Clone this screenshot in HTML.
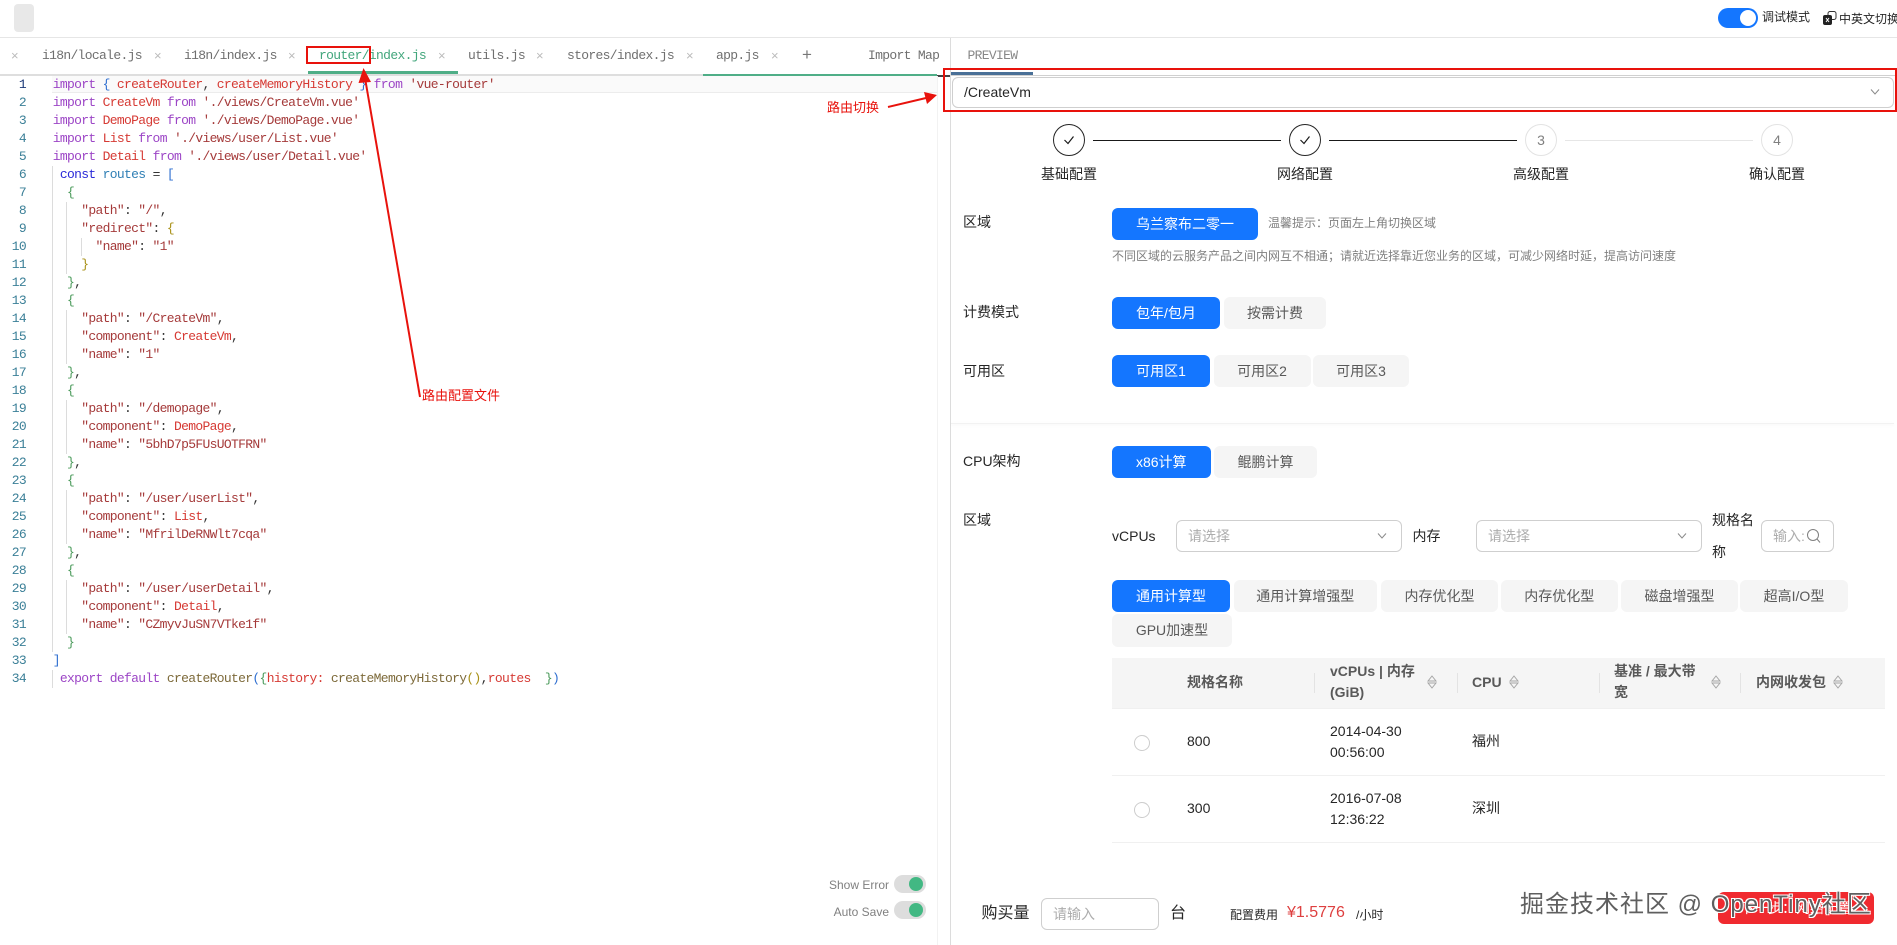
<!DOCTYPE html>
<html lang="zh"><head><meta charset="utf-8"><title>Playground</title>
<style>
html,body{margin:0;padding:0;width:1897px;height:945px;overflow:hidden;background:#fff}
body{position:relative;font-family:"Liberation Sans","Noto Sans CJK SC",sans-serif;font-size:14px;color:#262626}
.a{position:absolute;white-space:nowrap}
.t{position:absolute;white-space:nowrap;line-height:20px}
.mono{font-family:"Liberation Mono","Noto Sans CJK SC",monospace;font-size:13px;letter-spacing:-.67px}
.tab{position:absolute;top:47px;line-height:18px;color:#6f6f6f;white-space:nowrap}
.x{position:absolute;top:47px;line-height:18px;color:#bbb;font-size:13px;font-family:"Liberation Sans",sans-serif}
#code{position:absolute;left:52.7px;top:76px;white-space:pre;line-height:18px;color:#333}
#nums{position:absolute;left:0;top:76px;width:26px;text-align:right;line-height:18px;color:#3a7f97}
.k{color:#9c45c6}.b{color:#2f6fd0}.r{color:#d63a34}.s{color:#a53a3a}.g{color:#4a9a5a}.y{color:#a89016}.f{color:#7d6a3a}.c{color:#2a2ad8}.v{color:#2f7fb5}
.gd{position:absolute;width:1px;background:#dcdcdc}
.btn{position:absolute;height:32px;line-height:32px;text-align:center;border-radius:6px;background:#f5f5f5;color:#595959;white-space:nowrap}
.btn.on{background:#1476ff;color:#fff}
.box{position:absolute;box-sizing:border-box;border:1px solid #cfcfcf;border-radius:6px;background:#fff}
.ph{color:#adadad}
.circ{position:absolute;top:124px;width:32px;height:32px;box-sizing:border-box;border-radius:50%;border:1px solid #262626;text-align:center;line-height:30px;color:#808080;background:#fff}
.circ.off{border-color:#e3e3e3}
.ln{position:absolute;top:140px;height:1px;background:#191919}
.lab{position:absolute;top:164px;width:80px;text-align:center;line-height:20px}
.th{position:absolute;color:#595959;font-weight:700;line-height:21px;white-space:nowrap}
.dv{position:absolute;top:673px;height:20px;width:1px;background:#e3e3e3}
.radio{position:absolute;width:16px;height:16px;box-sizing:border-box;border:1px solid #cdcdcd;border-radius:50%;background:#fff}
.hl{position:absolute;height:1px;background:#f0f0f0}
.tg{position:absolute;width:32px;height:18px;border-radius:9px;background:#ddd}
.tg i{position:absolute;right:3px;top:2px;width:14px;height:14px;border-radius:50%;background:#42b883}
.red{color:#e8120c;font-size:13px}
</style></head><body>

<!-- top bar -->
<div class="a" style="left:14px;top:4px;width:20px;height:28px;border-radius:4px;background:#e8e8e8"></div>
<div class="a" style="left:0;top:37px;width:1897px;height:1px;background:#e6e6e6"></div>
<div class="a" style="left:1718px;top:8px;width:40px;height:20px;border-radius:10px;background:#1476ff"><div class="a" style="right:2px;top:2px;width:16px;height:16px;border-radius:50%;background:#fff"></div></div>
<div class="t" style="left:1762px;top:7px;font-size:12px">调试模式</div>
<svg class="a" style="left:1823px;top:11px" width="15" height="14" viewBox="0 0 15 14"><rect x="5" y=".5" width="8" height="8" rx="2" fill="#fff" stroke="#333"/><rect x="0" y="4" width="9" height="10" rx="2" fill="#222"/><path d="M3 7l3 4M6 7l-3 4" stroke="#fff" fill="none"/></svg>
<div class="t" style="left:1839px;top:9px;font-size:12px">中英文切换</div>

<!-- editor tabs -->
<div class="mono">
<span class="x" style="left:11px">×</span><span class="tab" style="left:42px">i18n/locale.js</span>
<span class="x" style="left:154px">×</span><span class="tab" style="left:184px">i18n/index.js</span>
<span class="x" style="left:288px">×</span><span class="tab" style="left:319px;color:#42a67c">router/index.js</span>
<span class="x" style="left:438px">×</span><span class="tab" style="left:468px">utils.js</span>
<span class="x" style="left:536px">×</span><span class="tab" style="left:567px">stores/index.js</span>
<span class="x" style="left:686px">×</span><span class="tab" style="left:716px">app.js</span>
<span class="x" style="left:771px">×</span><span class="x" style="left:802px;font-size:17px;color:#777;top:46px">+</span>
<span class="tab" style="left:868px">Import Map</span>
<span class="tab" style="left:967.5px;color:#888">PREVIEW</span>
</div>
<div class="a" style="left:0;top:74px;width:937px;height:2px;background:#dedede"></div>
<div class="a" style="left:308px;top:71px;width:150px;height:3px;background:#4fae87"></div>
<div class="a" style="left:703px;top:73.5px;width:234px;height:2px;background:#4fae87"></div>
<div class="a" style="left:951px;top:75px;width:946px;height:1px;background:#d0d0d0"></div>
<div class="a" style="left:951px;top:72px;width:82px;height:3px;background:#4a7097"></div>
<div class="a" style="left:937px;top:75px;width:14px;height:1.5px;background:#444"></div>

<!-- editor -->
<div class="a" style="left:52px;top:76px;width:885px;height:17px;background:#fafafa;border-bottom:1px solid #ececec;box-sizing:border-box"></div>
<div class="a" style="left:936.5px;top:76px;width:1px;height:869px;background:#f2f2f2"></div>
<div class="a" style="left:950px;top:38px;width:1px;height:907px;background:#dcdcdc"></div>

<div class="gd" style="left:52px;top:166px;height:486px"></div>
<div class="gd" style="left:52px;top:670px;height:18px"></div>
<div class="gd" style="left:66px;top:202px;height:72px"></div>
<div class="gd" style="left:66px;top:310px;height:54px"></div>
<div class="gd" style="left:66px;top:400px;height:54px"></div>
<div class="gd" style="left:66px;top:490px;height:54px"></div>
<div class="gd" style="left:66px;top:580px;height:54px"></div>
<div class="gd" style="left:81px;top:238px;height:18px"></div>

<div id="nums" class="mono"><span style="color:#1d3a78">1</span>
<br>2<br>3<br>4<br>5<br>6<br>7<br>8<br>9<br>10<br>11<br>12<br>13<br>14<br>15<br>16<br>17<br>18<br>19<br>20<br>21<br>22<br>23<br>24<br>25<br>26<br>27<br>28<br>29<br>30<br>31<br>32<br>33<br>34</div>

<div id="code" class="mono"><span class="k">import</span> <span class="b">{</span> <span class="r">createRouter</span>, <span class="r">createMemoryHistory</span> <span class="b">}</span> <span class="k">from</span> <span class="s">'vue-router'</span>
<span class="k">import</span> <span class="r">CreateVm</span> <span class="k">from</span> <span class="s">'./views/CreateVm.vue'</span>
<span class="k">import</span> <span class="r">DemoPage</span> <span class="k">from</span> <span class="s">'./views/DemoPage.vue'</span>
<span class="k">import</span> <span class="r">List</span> <span class="k">from</span> <span class="s">'./views/user/List.vue'</span>
<span class="k">import</span> <span class="r">Detail</span> <span class="k">from</span> <span class="s">'./views/user/Detail.vue'</span>
 <span class="c">const</span> <span class="v">routes</span> = <span class="b">[</span>
  <span class="g">{</span>
    <span class="s">"path"</span>: <span class="s">"/"</span>,
    <span class="s">"redirect"</span>: <span class="y">{</span>
      <span class="s">"name"</span>: <span class="s">"1"</span>
    <span class="y">}</span>
  <span class="g">}</span>,
  <span class="g">{</span>
    <span class="s">"path"</span>: <span class="s">"/CreateVm"</span>,
    <span class="s">"component"</span>: <span class="r">CreateVm</span>,
    <span class="s">"name"</span>: <span class="s">"1"</span>
  <span class="g">}</span>,
  <span class="g">{</span>
    <span class="s">"path"</span>: <span class="s">"/demopage"</span>,
    <span class="s">"component"</span>: <span class="r">DemoPage</span>,
    <span class="s">"name"</span>: <span class="s">"5bhD7p5FUsUOTFRN"</span>
  <span class="g">}</span>,
  <span class="g">{</span>
    <span class="s">"path"</span>: <span class="s">"/user/userList"</span>,
    <span class="s">"component"</span>: <span class="r">List</span>,
    <span class="s">"name"</span>: <span class="s">"MfrilDeRNWlt7cqa"</span>
  <span class="g">}</span>,
  <span class="g">{</span>
    <span class="s">"path"</span>: <span class="s">"/user/userDetail"</span>,
    <span class="s">"component"</span>: <span class="r">Detail</span>,
    <span class="s">"name"</span>: <span class="s">"CZmyvJuSN7VTke1f"</span>
  <span class="g">}</span>
<span class="b">]</span>
 <span class="k">export</span> <span class="k">default</span> <span class="f">createRouter</span><span class="b">(</span><span class="g">{</span><span class="r">history:</span> <span class="f">createMemoryHistory</span><span class="y">()</span>,<span class="r">routes</span>  <span class="g">}</span><span class="b">)</span></div>

<div class="t" style="right:1008px;top:875px;font-size:12px;color:#808080">Show Error</div>
<div class="tg" style="left:894px;top:875px"><i></i></div>
<div class="t" style="right:1008px;top:902px;font-size:12px;color:#808080">Auto Save</div>
<div class="tg" style="left:894px;top:901px"><i></i></div>

<!-- preview select -->
<div class="box" style="left:952px;top:77px;width:942px;height:31px"></div>
<div class="t" style="left:964px;top:82px">/CreateVm</div>
<svg class="a" style="left:1870px;top:88px" width="10" height="8" viewBox="0 0 10 8"><path d="M1 1.500L5 6l4-4.500" fill="none" stroke="#8a8a8a"/></svg>

<!-- steps -->
<div class="circ" style="left:1053px"><svg width="14" height="14" viewBox="0 0 14 14" style="margin-top:8px"><path d="M2.500 7l3.500 3.500 5.500-7" fill="none" stroke="#191919" stroke-width="1.2"/></svg></div>
<div class="circ" style="left:1289px"><svg width="14" height="14" viewBox="0 0 14 14" style="margin-top:8px"><path d="M2.500 7l3.500 3.500 5.500-7" fill="none" stroke="#191919" stroke-width="1.2"/></svg></div>
<div class="circ off" style="left:1525px">3</div>
<div class="circ off" style="left:1761px">4</div>
<div class="ln" style="left:1093px;width:188px"></div>
<div class="ln" style="left:1329px;width:188px"></div>
<div class="ln" style="left:1564.5px;width:188.5px;background:#e6e6e6"></div>
<div class="lab" style="left:1029px">基础配置</div>
<div class="lab" style="left:1265px">网络配置</div>
<div class="lab" style="left:1501px">高级配置</div>
<div class="lab" style="left:1737px">确认配置</div>

<!-- form -->
<div class="t" style="left:963px;top:212px">区域</div>
<div class="btn on" style="left:1112px;top:208px;width:146px">乌兰察布二零一</div>
<div class="t" style="left:1268px;top:213px;font-size:12px;color:#808080">温馨提示：页面左上角切换区域</div>
<div class="t" style="left:1112px;top:246px;font-size:12px;color:#808080">不同区域的云服务产品之间内网互不相通；请就近选择靠近您业务的区域，可减少网络时延，提高访问速度</div>

<div class="t" style="left:963px;top:302px">计费模式</div>
<div class="btn on" style="left:1112px;top:297px;width:108px">包年/包月</div>
<div class="btn" style="left:1224px;top:297px;width:102px">按需计费</div>

<div class="t" style="left:963px;top:361px">可用区</div>
<div class="btn on" style="left:1112px;top:355px;width:98px">可用区1</div>
<div class="btn" style="left:1213.5px;top:355px;width:97px">可用区2</div>
<div class="btn" style="left:1313px;top:355px;width:96px">可用区3</div>

<div class="a" style="left:951px;top:423px;width:943px;height:1px;background:#f2f2f2;box-shadow:0 1px 3px rgba(0,0,0,.07)"></div>

<div class="t" style="left:963px;top:451px">CPU架构</div>
<div class="btn on" style="left:1112px;top:446px;width:98.5px">x86计算</div>
<div class="btn" style="left:1214px;top:446px;width:103px">鲲鹏计算</div>

<div class="t" style="left:963px;top:510px">区域</div>
<div class="t" style="left:1112px;top:526px">vCPUs</div>
<div class="box" style="left:1175.5px;top:520px;width:226px;height:32px"></div>
<div class="t ph" style="left:1188px;top:526px">请选择</div>
<svg class="a" style="left:1377px;top:532px" width="10" height="8" viewBox="0 0 10 8"><path d="M1 1.500L5 6l4-4.500" fill="none" stroke="#8a8a8a"/></svg>
<div class="t" style="left:1412.5px;top:526px">内存</div>
<div class="box" style="left:1476px;top:520px;width:226px;height:32px"></div>
<div class="t ph" style="left:1488px;top:526px">请选择</div>
<svg class="a" style="left:1677px;top:532px" width="10" height="8" viewBox="0 0 10 8"><path d="M1 1.500L5 6l4-4.500" fill="none" stroke="#8a8a8a"/></svg>
<div class="t" style="left:1712px;top:510px">规格名</div>
<div class="t" style="left:1712px;top:542px">称</div>
<div class="box" style="left:1761px;top:520px;width:73px;height:32px;overflow:hidden"></div>
<div class="t ph" style="left:1773px;top:526px">输入:</div>
<svg class="a" style="left:1806px;top:528px" width="15" height="16" viewBox="0 0 15 16"><circle cx="7" cy="7" r="5.500" fill="#fff" stroke="#808080"/><path d="M11 11l3 3.500" stroke="#808080"/></svg>

<div class="btn on" style="left:1112px;top:580px;width:118px">通用计算型</div>
<div class="btn" style="left:1233.5px;top:580px;width:143.5px">通用计算增强型</div>
<div class="btn" style="left:1381px;top:580px;width:117px">内存优化型</div>
<div class="btn" style="left:1501px;top:580px;width:116.5px">内存优化型</div>
<div class="btn" style="left:1621px;top:580px;width:117px">磁盘增强型</div>
<div class="btn" style="left:1740px;top:580px;width:108px">超高I/O型</div>
<div class="btn" style="left:1112px;top:614px;width:120px;height:33px">GPU加速型</div>

<!-- table -->
<div class="a" style="left:1112px;top:658px;width:772.5px;height:50px;background:#f5f5f5"></div>
<div class="hl" style="left:1112px;top:708px;width:772.5px"></div>
<div class="hl" style="left:1112px;top:775px;width:772.5px"></div>
<div class="hl" style="left:1112px;top:842px;width:772.5px"></div>
<div class="dv" style="left:1314px"></div><div class="dv" style="left:1456.5px"></div><div class="dv" style="left:1599px"></div><div class="dv" style="left:1740px"></div>
<div class="th" style="left:1187px;top:672px">规格名称</div>
<div class="th" style="left:1330px;top:661px">vCPUs | 内存<br>(GiB)</div>
<div class="th" style="left:1472px;top:672px">CPU</div>
<div class="th" style="left:1614px;top:661px">基准 / 最大带<br>宽</div>
<div class="th" style="left:1756px;top:672px">内网收发包</div>
<svg class="a" style="left:1427px;top:675px" width="10" height="14" viewBox="0 0 10 14"><path d="M5 1L9 6H1zM5 13L9 8H1z" fill="none" stroke="#a5a5a5"/></svg>
<svg class="a" style="left:1509px;top:675px" width="10" height="14" viewBox="0 0 10 14"><path d="M5 1L9 6H1zM5 13L9 8H1z" fill="none" stroke="#a5a5a5"/></svg>
<svg class="a" style="left:1711px;top:675px" width="10" height="14" viewBox="0 0 10 14"><path d="M5 1L9 6H1zM5 13L9 8H1z" fill="none" stroke="#a5a5a5"/></svg>
<svg class="a" style="left:1833px;top:675px" width="10" height="14" viewBox="0 0 10 14"><path d="M5 1L9 6H1zM5 13L9 8H1z" fill="none" stroke="#a5a5a5"/></svg>

<div class="radio" style="left:1134px;top:735px"></div>
<div class="t" style="left:1187px;top:731px">800</div>
<div class="t" style="left:1330px;top:721px">2014-04-30</div>
<div class="t" style="left:1330px;top:742px">00:56:00</div>
<div class="t" style="left:1472px;top:731px">福州</div>
<div class="radio" style="left:1134px;top:802px"></div>
<div class="t" style="left:1187px;top:798px">300</div>
<div class="t" style="left:1330px;top:788px">2016-07-08</div>
<div class="t" style="left:1330px;top:809px">12:36:22</div>
<div class="t" style="left:1472px;top:798px">深圳</div>

<!-- footer -->
<div class="t" style="left:981.5px;top:904px;font-size:16px">购买量</div>
<div class="box" style="left:1041px;top:898px;width:118px;height:32px"></div>
<div class="t ph" style="left:1053px;top:904px">请输入</div>
<div class="t" style="left:1170px;top:904px;font-size:16px">台</div>
<div class="t" style="left:1230px;top:905px;font-size:12px">配置费用</div>
<div class="t" style="left:1287px;top:903px;font-size:16px;color:#de4040">¥1.5776</div>
<div class="t" style="left:1356px;top:905px;font-size:12px">/小时</div>
<div class="btn" style="left:1718px;top:892px;width:156px;background:#f02a2f;color:#fff">下一步：网络配置</div>
<div class="t" style="left:1520px;top:890px;font-size:24px;line-height:30px;letter-spacing:1px;color:#5f5f5f;text-shadow:1px 1px 0 #fff,-1px -1px 0 #fff,1px -1px 0 #fff,-1px 1px 0 #fff">掘金技术社区 @ OpenTiny社区</div>

<!-- annotations -->
<div class="a" style="left:306px;top:46px;width:65px;height:18px;box-sizing:border-box;border:2px solid #e8120c"></div>
<div class="a" style="left:943px;top:68px;width:954px;height:44px;box-sizing:border-box;border:2px solid #e8120c"></div>
<svg class="a" style="left:0;top:0;pointer-events:none" width="1897" height="945" viewBox="0 0 1897 945">
<path d="M420 397L365 78" stroke="#e8120c" stroke-width="2" fill="none"/>
<path d="M363.500 68L371 82 358.500 83z" fill="#e8120c"/>
<path d="M888 107L926 98" stroke="#e8120c" stroke-width="2" fill="none"/>
<path d="M937 95L924 92 927 104z" fill="#e8120c"/>
</svg>
<div class="t red" style="left:422px;top:386px">路由配置文件</div>
<div class="t red" style="left:827px;top:98px">路由切换</div>
</body></html>
